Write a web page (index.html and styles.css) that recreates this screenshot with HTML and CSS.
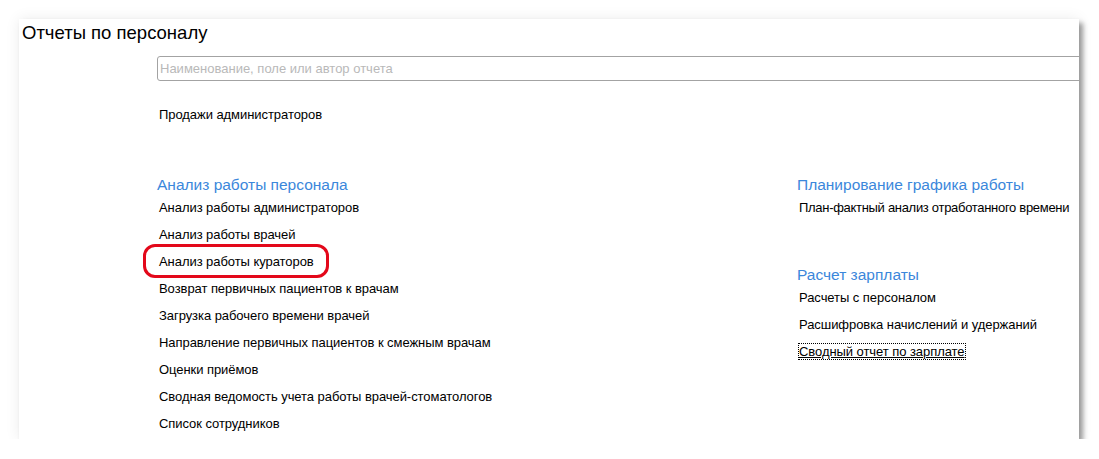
FILE: index.html
```html
<!DOCTYPE html>
<html lang="ru">
<head>
  <meta charset="UTF-8">
  <title>Отчеты по персоналу</title>
  <link rel="stylesheet" href="styles.css">
</head>
<body>
  <div class="panel">
    <h1 class="title">Отчеты по персоналу</h1>

    <div class="content">
      <!-- Search field -->
      <input class="search" type="text" placeholder="Наименование, поле или автор отчета">

      <!-- Reports without a group -->
      <ul class="items top-items">
        <li><span class="link">Продажи администраторов</span></li>
      </ul>

      <div class="columns">
        <div class="column">
          <section class="group">
            <h2>Анализ работы персонала</h2>
            <ul class="items">
              <li><span class="link">Анализ работы администраторов</span></li>
              <li><span class="link">Анализ работы врачей</span></li>
              <li><span class="link marked">Анализ работы кураторов</span></li>
              <li><span class="link">Возврат первичных пациентов к врачам</span></li>
              <li><span class="link">Загрузка рабочего времени врачей</span></li>
              <li><span class="link">Направление первичных пациентов к смежным врачам</span></li>
              <li><span class="link">Оценки приёмов</span></li>
              <li><span class="link">Сводная ведомость учета работы врачей-стоматологов</span></li>
              <li><span class="link">Список сотрудников</span></li>
            </ul>
          </section>
        </div>

        <div class="column">
          <section class="group">
            <h2>Планирование графика работы</h2>
            <ul class="items">
              <li><span class="link tight">План-фактный анализ отработанного времени</span></li>
            </ul>
          </section>
          <section class="group">
            <h2>Расчет зарплаты</h2>
            <ul class="items">
              <li><span class="link">Расчеты с персоналом</span></li>
              <li><span class="link">Расшифровка начислений и удержаний</span></li>
              <li><span class="link focused">Сводный отчет по зарплате</span></li>
            </ul>
          </section>
        </div>
      </div>
    </div>
  </div>
</body>
</html>
```

FILE: styles.css
```css
body {
  margin: 0;
  background-color: #fff;
  font-family: "Liberation Sans", Arial, sans-serif;
  color: #000;
}

.panel {
  box-sizing: border-box;
  width: 1060px;
  height: 420px;
  margin: 19px 0 0 19px;
  background-color: #fff;
  overflow: hidden;
  box-shadow: 4px 4px 5px rgba(0, 0, 0, 0.38), 0 0 14px rgba(0, 0, 0, 0.08);
}

.title {
  margin: 0;
  padding: 3px 0 0 3px;
  font-size: 18.5px;
  font-weight: normal;
  line-height: 22px;
}

.content {
  padding-left: 138px;
}

.search {
  display: block;
  box-sizing: border-box;
  width: 1000px;
  height: 25px;
  margin: 12px 0 0;
  padding: 0 0 0 2px;
  border: 1px solid #a3a3a3;
  border-radius: 3px;
  font-family: inherit;
  font-size: 13px;
  color: #000;
  outline: none;
}

.search::placeholder {
  color: #b9b9b9;
}

.items {
  list-style: none;
  margin: 0;
  padding: 0;
}

.items li {
  height: 27px;
  padding-left: 2px;
  font-size: 13px;
  line-height: 27px;
  letter-spacing: -0.06px;
  white-space: nowrap;
}

.top-items {
  margin-top: 20px;
}

.columns {
  display: flex;
  margin-top: 48px;
}

.column {
  flex: none;
  width: 640px;
  display: flex;
  flex-direction: column;
  gap: 45px;
}

.group h2 {
  margin: 0;
  font-size: 15.5px;
  font-weight: normal;
  line-height: 18px;
  color: #3b87db;
}

.link {
  position: relative;
}

.tight {
  letter-spacing: -0.3px;
}

/* red annotation round one report */
.marked::after {
  content: "";
  position: absolute;
  left: -16px;
  right: -15px;
  top: -10px;
  height: 28px;
  border: 3px solid #e3081a;
  border-radius: 12px;
}

.focused {
  text-decoration: underline;
  outline: 1px dotted #000;
  outline-offset: 0;
}
```
